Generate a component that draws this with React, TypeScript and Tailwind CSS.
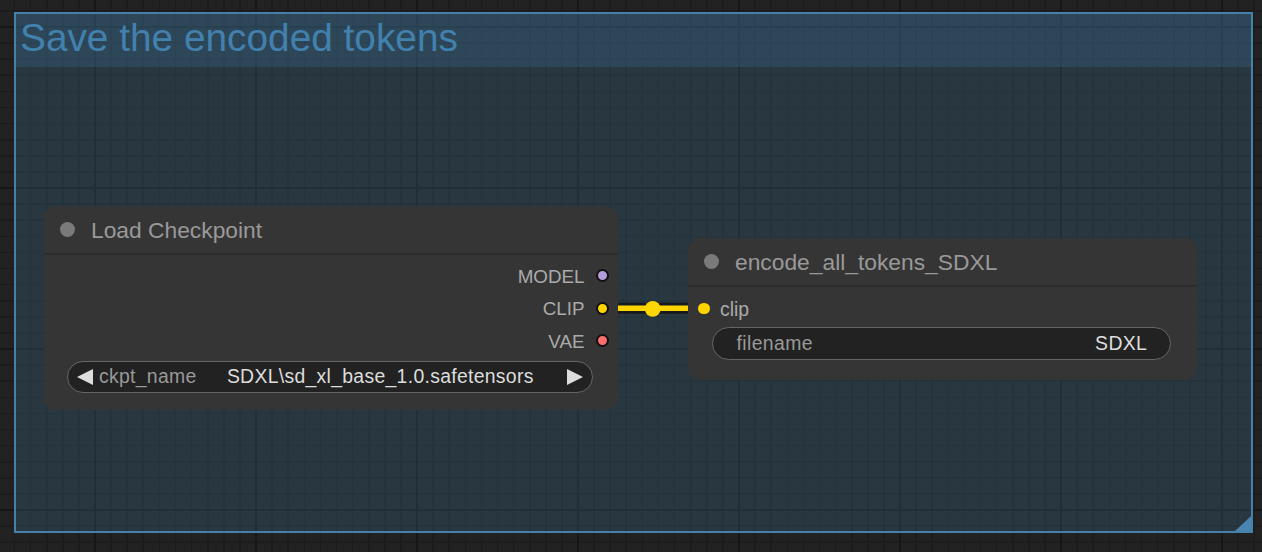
import React from 'react';

type Slot = { name: string; color: string };

const outputs: Slot[] = [
  { name: 'MODEL', color: '#b39ddb' },
  { name: 'CLIP', color: '#ffd500' },
  { name: 'VAE', color: '#ff6e6e' },
];

const NodeHeader: React.FC<{ title: string }> = ({ title }) => (
  <div className="h-[48.5px] shrink-0 flex items-center gap-[16px] pl-[16px] border-b-2 border-[#2c2c2c]">
    <span className="w-[15px] h-[15px] rounded-full bg-[#7a7a7a]" />
    <span className="mt-[3px] text-[22.8px] leading-none text-[#999]">{title}</span>
  </div>
);

const Arrow: React.FC<{ dir: 'left' | 'right' }> = ({ dir }) => (
  <svg width="16" height="16" viewBox="0 0 16 16" className="shrink-0">
    {dir === 'left' ? (
      <polygon points="16,0 0,8 16,16" fill="#dddddd" />
    ) : (
      <polygon points="0,0 16,8 0,16" fill="#dddddd" />
    )}
  </svg>
);

const App: React.FC = () => {
  return (
    <div className="relative w-[1262px] h-[552px] overflow-hidden bg-[#222] font-['Liberation_Sans',Arial,sans-serif] [background-image:repeating-linear-gradient(to_right,#171717_-67.25px,#171717_-64.75px,transparent_-64.75px,transparent_93.75px),repeating-linear-gradient(to_bottom,#171717_-135.25px,#171717_-132.75px,transparent_-132.75px,transparent_25.75px),repeating-linear-gradient(to_right,#1c1c1c_-2.4px,#1c1c1c_-0.8px,transparent_-0.8px,transparent_13.7px),repeating-linear-gradient(to_bottom,#1c1c1c_-6px,#1c1c1c_-4.4px,transparent_-4.4px,transparent_10.1px)]">
      {/* group */}
      <div className="absolute left-[14px] top-[12px] w-[1239px] h-[521px] border-2 border-[#4581ab] bg-[#3f789e]/25 flex flex-col">
        <div className="h-[53px] shrink-0 bg-[#3f789e]/25 pl-[4px] pt-[5px]">
          <span className="text-[38.8px] leading-none text-[#4280ad]">Save the encoded tokens</span>
        </div>
        <svg width="16" height="15" viewBox="0 0 16 15" className="absolute right-0 bottom-0">
          <polygon points="16,0 16,15 0,15" fill="#4a84af" />
        </svg>
      </div>

      {/* link CLIP -> clip */}
      <svg width="100" height="26" viewBox="0 0 100 26" className="absolute left-[600px] top-[296px]">
        <line x1="10" y1="12.3" x2="95" y2="12.3" stroke="#161a1d" strokeWidth="11" />
        <line x1="10" y1="12.3" x2="95" y2="12.3" stroke="#ffd500" strokeWidth="5.4" />
        <circle cx="52.7" cy="12.8" r="7.9" fill="#ffd500" />
      </svg>

      {/* Load Checkpoint */}
      <div className="absolute left-[44px] top-[206px] w-[574px] h-[204px] rounded-[12px] bg-[#353535] flex flex-col">
        <NodeHeader title="Load Checkpoint" />
        <div className="pt-[5.35px] pr-[9.5px] flex flex-col">
          {outputs.map((o) => (
            <div key={o.name} className="h-[32.3px] flex items-center justify-end gap-[11px]">
              <span className="mt-[3px] text-[18.8px] leading-none text-[#aaa]">{o.name}</span>
              <span
                className={
                  o.name === 'MODEL'
                    ? 'w-[13px] h-[13px] rounded-full border-2 border-[#111] bg-[#b39ddb]'
                    : o.name === 'CLIP'
                    ? 'w-[13px] h-[13px] rounded-full border-2 border-[#111] bg-[#ffd500]'
                    : 'w-[13px] h-[13px] rounded-full border-2 border-[#111] bg-[#ff6e6e]'
                }
              />
            </div>
          ))}
        </div>
        <div className="mt-[4.25px] ml-[23px] mr-[25.3px] h-[32.3px] rounded-full border border-[#666] bg-[#222] px-[9px] flex items-center text-[19.4px] leading-none tracking-[0.3px]">
          <Arrow dir="left" />
          <span className="ml-[6px] text-[#999]">ckpt_name</span>
          <span className="flex-1 text-right text-[#ddd]">SDXL\sd_xl_base_1.0.safetensors</span>
          <span className="ml-[33px] flex">
            <Arrow dir="right" />
          </span>
        </div>
      </div>

      {/* encode_all_tokens_SDXL */}
      <div className="absolute left-[688px] top-[238px] w-[509px] h-[142px] rounded-[12px] bg-[#353535] flex flex-col">
        <NodeHeader title="encode_all_tokens_SDXL" />
        <div className="pt-[5.7px] pl-[10px]">
          <div className="h-[32.3px] flex items-center gap-[10.5px]">
            <span className="w-[11.5px] h-[11.5px] rounded-full bg-[#ffd500]" />
            <span className="mt-[2px] text-[19.4px] leading-none text-[#aaa]">clip</span>
          </div>
        </div>
        <div className="mt-[3px] ml-[23.7px] mr-[25.7px] h-[32.5px] rounded-full border border-[#666] bg-[#222] pl-[23.8px] pr-[23px] flex items-center justify-between text-[19.4px] leading-none tracking-[0.4px]">
          <span className="text-[#999]">filename</span>
          <span className="text-[#ddd]">SDXL</span>
        </div>
      </div>
    </div>
  );
};

export default App;
